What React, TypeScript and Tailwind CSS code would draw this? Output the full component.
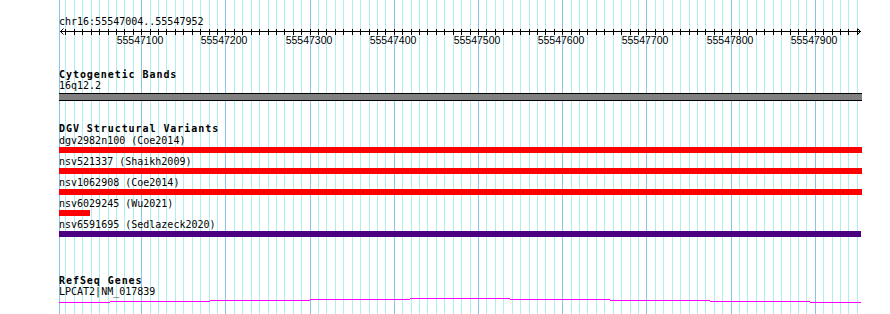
import React from 'react';

const TRACK_W = 803;
const TOTAL_H = 314;

// pixel position inside the track area (which begins at x=59) for a base pair
const bpX = (bp: number) => 82.7 + (bp - 55547100) * 0.842;

const minorTicks: number[] = [];
for (let b = 55547010; b <= 55547950; b += 10) minorTicks.push(b);
const majorTicks = minorTicks.filter(b => b % 100 === 0);

const variants = [
  { name: 'dgv2982n100 (Coe2014)', color: 'bg-[#ff0000]', width: 803 },
  { name: 'nsv521337 (Shaikh2009)', color: 'bg-[#ff0000]', width: 803 },
  { name: 'nsv1062908 (Coe2014)', color: 'bg-[#ff0000]', width: 803 },
  { name: 'nsv6029245 (Wu2021)', color: 'bg-[#ff0000]', width: 31 },
  { name: 'nsv6591695 (Sedlazeck2020)', color: 'bg-[#4b0082]', width: 802 },
];

// exon/intron line of the gene, drawn as stepped segments [x0, x1, y]
const geneSteps: [number, number, number][] = [
  [0, 51, 302],
  [51, 151, 301],
  [151, 251, 300],
  [251, 351, 299],
  [351, 451, 298],
  [451, 551, 299],
  [551, 651, 300],
  [651, 751, 301],
  [751, 802, 302],
];

function GridLines() {
  return (
    <svg className="absolute top-0 left-[59px] pointer-events-none" width={TRACK_W} height={TOTAL_H}>
      <rect x={0} y={0} width={1} height={TOTAL_H} fill="#88c4ea" />
      {minorTicks.map(b => (
        <rect
          key={b}
          x={Math.floor(bpX(b))}
          y={0}
          width={1}
          height={TOTAL_H}
          fill={b % 100 === 0 ? '#88c4ea' : '#aeeef0'}
        />
      ))}
    </svg>
  );
}

function Ruler() {
  return (
    <div>
      <div className="pt-[16px] text-[10px] leading-[12px] text-black">chr16:55547004..55547952</div>
      <div className="relative h-[20px]">
        <svg className="block" width={TRACK_W} height={8}>
          <rect x={1} y={3} width={801} height={1} fill="#000" />
          {minorTicks.map(b => (
            <rect key={b} x={Math.floor(bpX(b))} y={1} width={1} height={6} fill="#000" />
          ))}
          <path d="M4.5 0.5 L1.5 3.5 L4.5 6.5" stroke="#000" fill="none" />
          <path d="M798.5 0.5 L801.5 3.5 L798.5 6.5" stroke="#000" fill="none" />
        </svg>
        {majorTicks.map(b => (
          <span
            key={b}
            className="absolute top-[7px] -translate-x-1/2 font-['Liberation_Sans',Arial,sans-serif] text-[10.5px] leading-[10.5px] text-black"
            style={{ left: Math.floor(bpX(b)) - 1 }}
          >
            {b}
          </span>
        ))}
      </div>
    </div>
  );
}

function TrackTitle({ children, className = '' }: { children: React.ReactNode; className?: string }) {
  return (
    <div className={`text-[10px] leading-[11px] font-bold tracking-[0.94px] text-black ${className}`}>
      {children}
    </div>
  );
}

export default function App() {
  return (
    <div className="relative w-[890px] h-[314px] overflow-hidden bg-white font-['DejaVu_Sans_Mono',monospace]">
      <GridLines />
      <div className="relative ml-[59px] w-[803px]">
        <Ruler />

        <TrackTitle className="mt-[21px]">Cytogenetic Bands</TrackTitle>
        <div className="text-[10px] leading-[11px] text-black">16q12.2</div>
        <div className="mt-[2px] h-[8px] border-y border-black bg-[#808080]" />

        <TrackTitle className="mt-[22px]">DGV Structural Variants</TrackTitle>
        <div className="flex flex-col gap-[2px]">
          {variants.map(v => (
            <div key={v.name}>
              <div className="mt-[1px] text-[10px] leading-[11px] text-black">{v.name}</div>
              <div className={`mt-[1px] h-[6px] ${v.color}`} style={{ width: v.width }} />
            </div>
          ))}
        </div>

        <TrackTitle className="mt-[38px]">RefSeq Genes</TrackTitle>
        <div className="text-[10px] leading-[11px] text-black">LPCAT2|NM_017839</div>
        <svg className="block" width={TRACK_W} height={8}>
          {geneSteps.map(([x0, x1, y]) => (
            <rect key={x0} x={x0} y={y - 297} width={x1 - x0} height={1} fill="#ff00ff" />
          ))}
        </svg>
      </div>
    </div>
  );
}
